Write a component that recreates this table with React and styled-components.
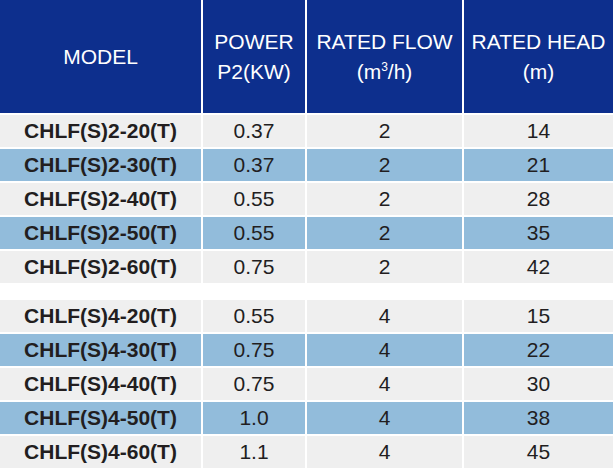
import styled, { createGlobalStyle } from "styled-components";

const GlobalStyle = createGlobalStyle`
  body {
    margin: 0;
    background: #ffffff;
    font-family: "Liberation Sans", Arial, sans-serif;
  }
`;

const COLS = "201px 102px 155px 149px";

const Table = styled.div`
  width: 613px;
  display: flex;
  flex-direction: column;
  gap: 2px;
`;
const HeadRow = styled.div`
  display: grid;
  grid-template-columns: ${COLS};
  column-gap: 2px;
  height: 113px;
`;
const HeadCell = styled.div`
  background-color: #0d2f8d;
  color: #ffffff;
  font-size: 21px;
  line-height: 30px;
  display: flex;
  align-items: center;
  justify-content: center;
  text-align: center;
  white-space: nowrap;
`;
const Label = styled.span`
  display: block;
`;
const Sup = styled.sup`
  font-size: 12px;
  vertical-align: 8px;
  line-height: 0;
`;
const Group = styled.div`
  display: flex;
  flex-direction: column;
  gap: 2px;
  & + & {
    margin-top: 15px;
  }
`;
const Row = styled.div`
  display: grid;
  grid-template-columns: ${COLS};
  column-gap: 2px;
  height: 32px;
`;
const Cell = styled.div`
  background-color: ${(p) => (p.$blue ? "#92bcdb" : "#efefef")};
  color: #221e1f;
  font-size: 21px;
  font-weight: ${(p) => (p.$bold ? 700 : 400)};
  display: flex;
  align-items: center;
  justify-content: center;
  padding-bottom: 1px;
  white-space: nowrap;
`;

const groups = [
  [
    ["CHLF(S)2-20(T)", "0.37", "2", "14"],
    ["CHLF(S)2-30(T)", "0.37", "2", "21"],
    ["CHLF(S)2-40(T)", "0.55", "2", "28"],
    ["CHLF(S)2-50(T)", "0.55", "2", "35"],
    ["CHLF(S)2-60(T)", "0.75", "2", "42"],
  ],
  [
    ["CHLF(S)4-20(T)", "0.55", "4", "15"],
    ["CHLF(S)4-30(T)", "0.75", "4", "22"],
    ["CHLF(S)4-40(T)", "0.75", "4", "30"],
    ["CHLF(S)4-50(T)", "1.0", "4", "38"],
    ["CHLF(S)4-60(T)", "1.1", "4", "45"],
  ],
];

export default function App() {
  return (
    <>
      <GlobalStyle />
      <Table>
        <HeadRow>
          <HeadCell>
            <Label>MODEL</Label>
          </HeadCell>
          <HeadCell>
            <Label>
              POWER
              <br />
              P2(KW)
            </Label>
          </HeadCell>
          <HeadCell>
            <Label>
              RATED FLOW
              <br />
              (m<Sup>3</Sup>/h)
            </Label>
          </HeadCell>
          <HeadCell>
            <Label>
              RATED HEAD
              <br />
              (m)
            </Label>
          </HeadCell>
        </HeadRow>
        {groups.map((rows, g) => (
          <Group key={g}>
            {rows.map((r, i) => (
              <Row key={r[0]}>
                {r.map((v, j) => (
                  <Cell key={j} $blue={i % 2 === 1} $bold={j === 0}>
                    {v}
                  </Cell>
                ))}
              </Row>
            ))}
          </Group>
        ))}
      </Table>
    </>
  );
}
